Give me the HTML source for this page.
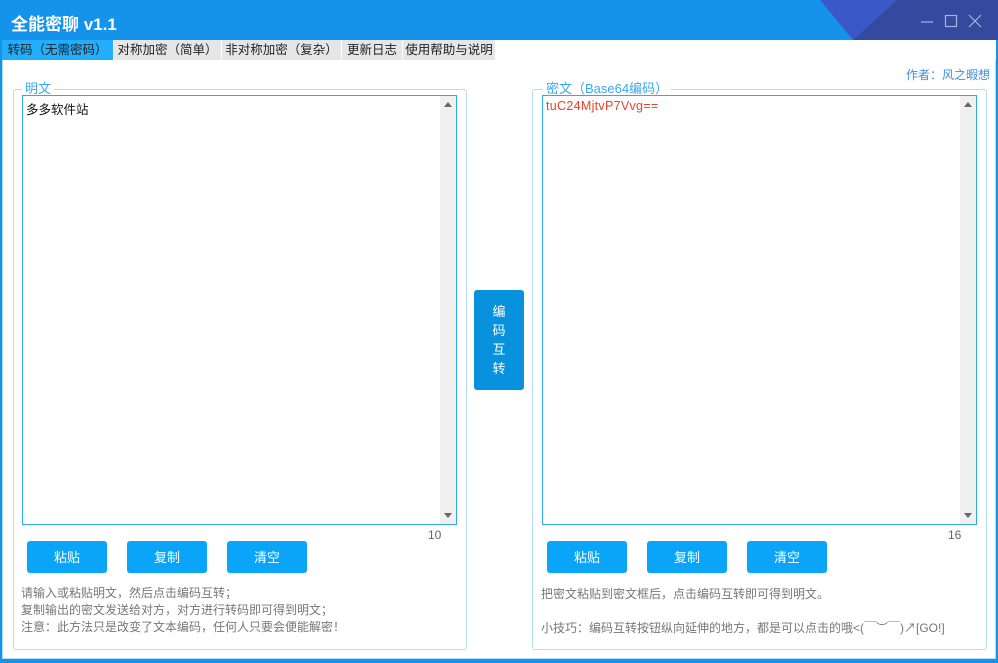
<!DOCTYPE html>
<html><head><meta charset="utf-8"><style>
*{box-sizing:border-box;margin:0;padding:0}
body{width:998px;height:663px;overflow:hidden;background:#1593ea;font-family:"Liberation Sans","Noto Sans CJK SC",sans-serif;position:relative}
.abs{position:absolute}
.title{left:0;top:0;width:998px;height:40px;background:#1593ea}
.title .t{left:11px;top:10px;color:#fff;font-size:17px;font-weight:bold}
.tabs{left:2px;top:40px;width:994px;height:20px;background:#fff}
.tab{position:absolute;top:0;height:20px;font-size:12.5px;line-height:21px;color:#222;background:#e6e6e6;text-align:center}
.panel{left:2px;top:60px;width:994px;height:599px;background:#fff}
.group{border:1px solid #b5dcf7;border-radius:3px}
.legend{background:#fff;color:#3aa8f0;font-size:13px;padding:0 3px;line-height:14px}
.ta{border:1px solid #2ea7f5;background:#fff}
.sb{position:absolute;right:0;top:0;width:16px;height:100%;background:#f0f0f0}
.up{position:absolute;left:4px;top:6px;border-left:4px solid transparent;border-right:4px solid transparent;border-bottom:5px solid #666}
.dn{position:absolute;left:4px;bottom:6px;border-left:4px solid transparent;border-right:4px solid transparent;border-top:5px solid #666}
.btn{position:absolute;width:80px;height:32px;background:#0aa5f9;border-radius:3px;color:#fff;font-size:13px;text-align:center;line-height:33px}
.hint{font-size:12px;color:#777;line-height:17px}
</style></head><body>
<div class="abs title">
<div class="abs t">全能密聊 v1.1</div>
<svg class="abs" style="left:0;top:0" width="998" height="40"><polygon points="820,0 897,0 853,40" fill="#3a58c8"/><polygon points="897,0 998,0 998,40 853,40" fill="#334a9e"/>
<line x1="921" y1="22" x2="933" y2="22" stroke="#aab4dc" stroke-width="1.2"/>
<rect x="945.5" y="15.5" width="11" height="11" fill="none" stroke="#aab4dc" stroke-width="1.2"/>
<path d="M969 15 L981 27 M981 15 L969 27" stroke="#aab4dc" stroke-width="1.2"/></svg>
</div>
<div class="abs tabs">
<div class="tab" style="left:0;width:111px;background:#22aefc">转码（无需密码）</div>
<div class="tab" style="left:112px;width:107px">对称加密（简单）</div>
<div class="tab" style="left:220px;width:119px">非对称加密（复杂）</div>
<div class="tab" style="left:340px;width:60px">更新日志</div>
<div class="tab" style="left:401px;width:92px">使用帮助与说明</div>
</div>
<div class="abs panel" style="border:1px solid #b5dcf7;border-top:none"></div>
<div class="abs" style="right:8px;top:66px;font-size:12px;color:#3a8ee8">作者：风之暇想</div>

<div class="abs group" style="left:13px;top:89px;width:454px;height:561px"></div>
<div class="abs legend" style="left:22px;top:82px">明文</div>
<div class="abs ta" style="left:22px;top:95px;width:435px;height:430px"><div style="font-size:12.5px;padding:3px 3px;color:#111">多多软件站</div><div class="sb"><div class="up"></div><div class="dn"></div></div></div>
<div class="abs" style="left:428px;top:528px;font-size:12px;color:#666">10</div>
<div class="btn" style="left:27px;top:541px">粘贴</div>
<div class="btn" style="left:127px;top:541px">复制</div>
<div class="btn" style="left:227px;top:541px">清空</div>
<div class="abs hint" style="left:21px;top:585px">请输入或粘贴明文，然后点击编码互转；<br>复制输出的密文发送给对方，对方进行转码即可得到明文；<br>注意：此方法只是改变了文本编码，任何人只要会便能解密！</div>

<div class="abs" style="left:474px;top:290px;width:50px;height:100px;background:#0891dc;border-radius:3px;color:#fff;font-size:13px;text-align:center;line-height:19px;padding-top:12px">编<br>码<br>互<br>转</div>

<div class="abs group" style="left:532px;top:89px;width:455px;height:561px"></div>
<div class="abs legend" style="left:543px;top:82px">密文（Base64编码）</div>
<div class="abs ta" style="left:542px;top:95px;width:435px;height:430px"><div style="font-size:12.5px;padding:3px 3px;color:#f53d25;letter-spacing:0.3px">tuC24MjtvP7Vvg==</div><div class="sb"><div class="up"></div><div class="dn"></div></div></div>
<div class="abs" style="left:948px;top:528px;font-size:12px;color:#666">16</div>
<div class="btn" style="left:547px;top:541px">粘贴</div>
<div class="btn" style="left:647px;top:541px">复制</div>
<div class="btn" style="left:747px;top:541px">清空</div>
<div class="abs hint" style="left:541px;top:586px">把密文粘贴到密文框后，点击编码互转即可得到明文。</div>
<div class="abs hint" style="left:541px;top:620px">小技巧：编码互转按钮纵向延伸的地方，都是可以点击的哦&lt;(￣︶￣)↗[GO!]</div>
</body></html>
